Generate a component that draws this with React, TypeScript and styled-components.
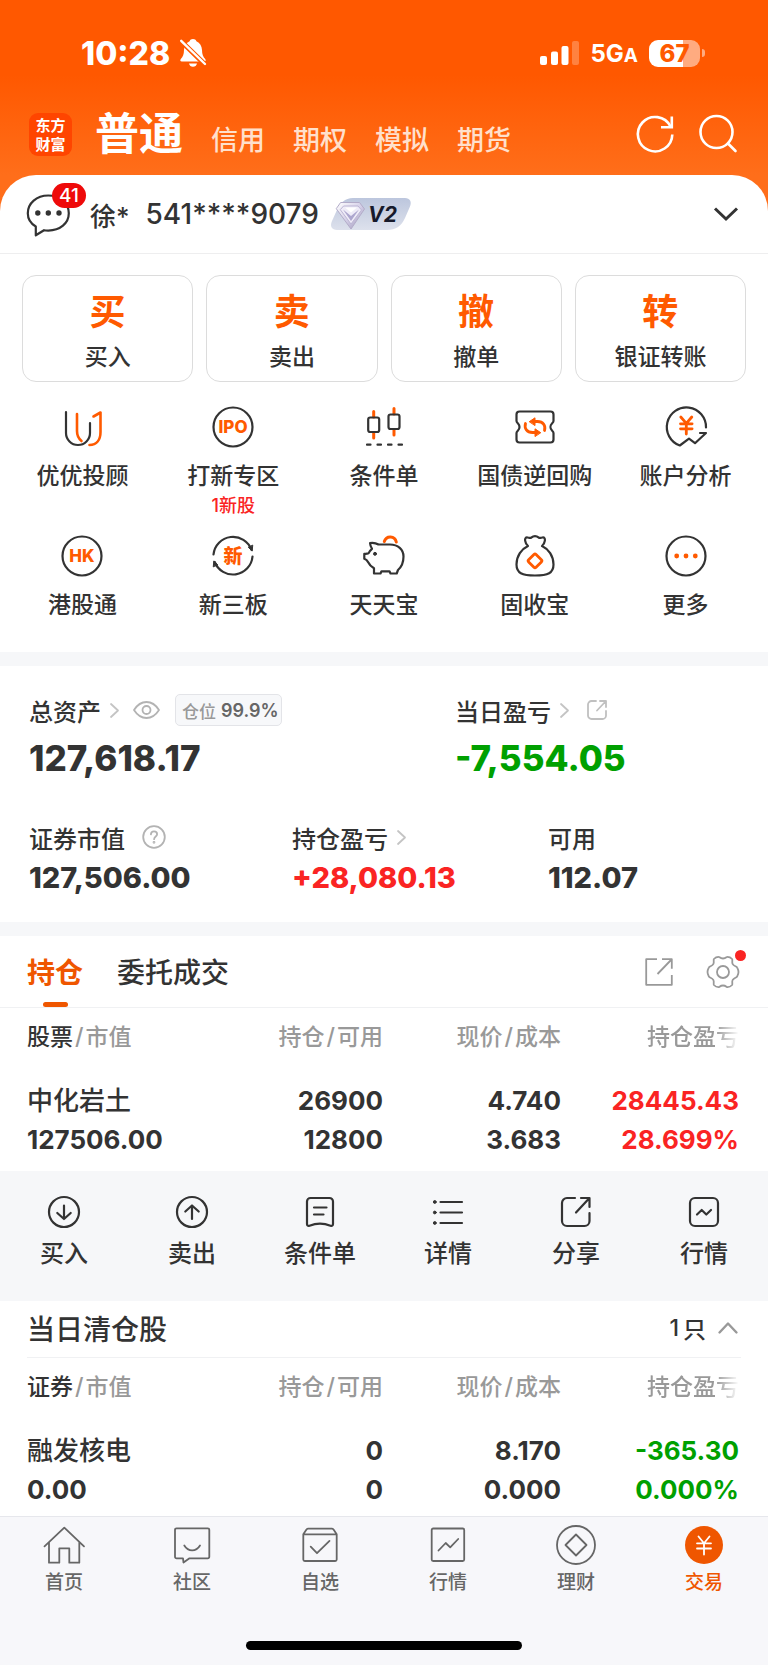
import React from "react";
import styled, { createGlobalStyle } from "styled-components";

const ORANGE = "#ff5a00";
const ACTIVE = "#ef5600";
const INK = "#333333";
const MUTED = "#999999";
const RED = "#fa2423";
const GREEN = "#00a000";

const GlobalStyle = createGlobalStyle`
  * { box-sizing: border-box; }
  body {
    margin: 0;
    background: #fff;
    color: ${INK};
    font-family: Inter, "Noto Sans CJK SC", sans-serif;
    font-weight: 500;
  }
  button {
    margin: 0;
    padding: 0;
    border: 0;
    background: none;
    color: inherit;
    font: inherit;
    cursor: pointer;
  }
  a { color: inherit; text-decoration: none; }
  h2, p, dl, dd, dt, ul { margin: 0; padding: 0; font-weight: inherit; font-size: inherit; }
  svg { display: block; flex: none; }
`;

/* ---------- page shell ---------- */

const Page = styled.div`
  background: linear-gradient(#ff5800 75px, #ff6e1a 175px);
`;

const Sheet = styled.main`
  background: #fff;
  border-radius: 36px 36px 0 0;
`;

const Divider = styled.div`
  height: 14px;
  background: #f6f7f9;
`;

/* ---------- status bar ---------- */

const StatusBar = styled.div`
  display: flex;
  align-items: center;
  height: 106px;
  padding: 0 63px 0 81px;
  color: #fff;
`;

const Clock = styled.span`
  font-size: 32px;
  font-weight: 800;
  margin-right: 10px;
`;

const StatusRight = styled.div`
  display: flex;
  align-items: center;
  margin-left: auto;
`;

const Network = styled.span`
  margin: 0 11px;
  font-size: 24px;
  font-weight: 700;
  small { font-size: 19px; }
`;

const Battery = styled.span`
  width: 51px;
  height: 27px;
  border-radius: 9px;
  background: linear-gradient(90deg, #fff 67%, #ffab80 67%);
  color: ${ORANGE};
  font-size: 24px;
  font-weight: 800;
  line-height: 27px;
  text-align: center;
`;

const BatteryTip = styled.span`
  width: 3px;
  height: 8px;
  margin-left: 2px;
  border-radius: 0 3px 3px 0;
  background: #ffab80;
`;

/* ---------- top navigation ---------- */

const TopNav = styled.header`
  display: flex;
  align-items: center;
  height: 69px;
  padding: 0 32px 13px 29px;
  color: #fff;
`;

const Logo = styled.a`
  display: flex;
  flex-direction: column;
  justify-content: center;
  width: 43px;
  height: 43px;
  border-radius: 9px;
  background: #ff4500;
  color: #fff;
  font-family: "Noto Sans CJK SC", sans-serif;
  font-size: 15px;
  font-weight: 700;
  line-height: 19px;
  text-align: center;
`;

const Modes = styled.nav`
  display: flex;
  align-items: baseline;
  gap: 28px;
  margin-left: 23px;
  padding-top: 6px;
`;

const Mode = styled.button<{ $active?: boolean }>`
  font-size: ${(p) => (p.$active ? 44 : 27)}px;
  font-weight: ${(p) => (p.$active ? 700 : 500)};
  line-height: 56px;
  color: ${(p) => (p.$active ? "#fff" : "#ffe0cc")};
`;

const NavIcons = styled.div`
  display: flex;
  gap: 25px;
  margin-left: auto;
`;

/* ---------- account ---------- */

const AccountBar = styled.div`
  display: flex;
  align-items: center;
  height: 79px;
  padding: 0 30px 0 26px;
  border-bottom: 1px solid #eeeeef;
  font-size: 28px;
`;

const ChatButton = styled.button`
  position: relative;
`;

const Badge = styled.span`
  position: absolute;
  top: -9px;
  left: 26px;
  width: 34px;
  height: 25px;
  border-radius: 13px;
  background: #ee0a0a;
  color: #fff;
  font-size: 19px;
  line-height: 25px;
  text-align: center;
`;

const Holder = styled.span`
  margin-left: 20px;
  font-size: 26px;
`;

const AccountNo = styled.span`
  margin-left: 16px;
`;

const Level = styled.span`
  display: flex;
  align-items: center;
  margin-left: 12px;
`;

const Expand = styled.button`
  margin-left: auto;
`;

/* ---------- trade cards ---------- */

const TradeCards = styled.div`
  display: grid;
  grid-template-columns: repeat(4, 1fr);
  gap: 13px;
  padding: 21px 22px 0;
`;

const TradeCard = styled.button`
  display: flex;
  flex-direction: column;
  align-items: center;
  height: 107px;
  padding-top: 12px;
  border: 1px solid #dcdcdc;
  border-radius: 14px;
  font-size: 23px;
  line-height: 32px;
`;

const BigGlyph = styled.span`
  margin-bottom: 5px;
  color: ${ORANGE};
  font-size: 36px;
  font-weight: 700;
  line-height: 48px;
`;

/* ---------- shortcuts ---------- */

const Shortcuts = styled.div`
  display: grid;
  grid-template-columns: repeat(5, 1fr);
  row-gap: 17px;
  padding: 24px 7px 33px;
`;

const Shortcut = styled.button`
  display: flex;
  flex-direction: column;
  align-items: center;
  justify-content: flex-start;
  font-size: 23px;
  line-height: 28px;
  svg { margin-bottom: 14px; }
`;

const Note = styled.span`
  margin-top: 4px;
  color: ${RED};
  font-size: 18px;
  line-height: 24px;
`;

/* ---------- assets ---------- */

const Assets = styled.section`
  padding: 28px 29px;
`;

const AssetRow = styled.dl<{ $columns: string }>`
  display: grid;
  grid-template-columns: ${(p) => p.$columns};
  & + & { margin-top: 43px; }
`;

const AssetLabel = styled.dt`
  display: flex;
  align-items: center;
  height: 32px;
  font-size: 24px;
  white-space: nowrap;
`;

const Amount = styled.dd<{ $large?: boolean; $color?: string }>`
  margin-top: ${(p) => (p.$large ? 12 : 9)}px;
  color: ${(p) => p.$color || INK};
  font-size: ${(p) => (p.$large ? 35 : 29)}px;
  font-weight: 800;
  line-height: ${(p) => (p.$large ? 40 : 32)}px;
`;

const IconButton = styled.button<{ $gap?: number }>`
  position: relative;
  margin-left: ${(p) => p.$gap || 0}px;
`;

const Ratio = styled.span`
  display: flex;
  align-items: center;
  gap: 5px;
  height: 32px;
  margin-left: 15px;
  padding: 0 2px 0 6px;
  border: 1px solid #e3e4e8;
  border-radius: 5px;
  background: #f7f8fa;
  color: ${MUTED};
  font-size: 17px;
  b { color: #666; font-size: 18px; font-weight: 600; }
`;

/* ---------- holdings ---------- */

const TabsRow = styled.div`
  display: flex;
  height: 72px;
  padding: 0 29px 0 27px;
  border-bottom: 1px solid #f0f1f3;
`;

const Tab = styled.button<{ $active?: boolean }>`
  display: flex;
  flex-direction: column;
  align-items: center;
  margin-right: 34px;
  color: ${(p) => (p.$active ? ACTIVE : INK)};
  font-size: 28px;
  font-weight: ${(p) => (p.$active ? 700 : 500)};
  line-height: 74px;
  &::after {
    content: "";
    width: 25px;
    height: 5px;
    margin-top: -8px;
    border-radius: 3px;
    background: ${(p) => (p.$active ? ACTIVE : "transparent")};
  }
`;

const TabTools = styled.div`
  display: flex;
  align-items: center;
  gap: 34px;
  margin-left: auto;
`;

const RedDot = styled.span`
  position: absolute;
  top: -6px;
  right: -7px;
  width: 11px;
  height: 11px;
  border-radius: 50%;
  background: ${RED};
`;

const TableWrap = styled.div`
  padding: 0 29px 0 27px;
`;

const Table = styled.table<{ $tight?: boolean }>`
  width: 100%;
  table-layout: fixed;
  border-collapse: collapse;
  white-space: nowrap;
  text-align: right;
  th {
    height: 58px;
    padding: 0 0 4px;
    color: ${MUTED};
    font-size: 23px;
    font-weight: 500;
  }
  th b { color: ${INK}; font-weight: 500; }
  th i { margin: 0 2px; font-style: normal; }
  td {
    padding: 15px 0 ${(p) => (p.$tight ? 7 : 12)}px;
    font-size: 26px;
    font-weight: 700;
    line-height: 39px;
  }
  th:first-child, td:first-child { text-align: left; }
  th:last-child {
    -webkit-mask-image: linear-gradient(90deg, #000 87%, transparent);
    mask-image: linear-gradient(90deg, #000 87%, transparent);
  }
`;

const Line = styled.div`
  height: 39px;
`;

const StockName = styled(Line)`
  font-size: 26px;
  font-weight: 500;
`;

const Change = styled.td<{ $color: string }>`
  color: ${(p) => p.$color};
`;

const Actions = styled.div`
  display: grid;
  grid-template-columns: repeat(6, 1fr);
  padding: 25px 0 31px;
  background: #f6f7f9;
`;

const Action = styled.button`
  display: flex;
  flex-direction: column;
  align-items: center;
  gap: 10px;
  font-size: 24px;
  line-height: 32px;
`;

const ClearedHead = styled.div`
  display: flex;
  align-items: center;
  height: 57px;
  margin: 0 27px;
  padding-bottom: 2px;
  border-bottom: 1px solid #f0f1f3;
  h2 { font-size: 28px; }
`;

const Count = styled.button`
  display: flex;
  align-items: center;
  gap: 4px;
  margin-left: auto;
  padding-right: 3px;
  font-size: 23px;
  svg { margin-left: 8px; }
`;

/* ---------- bottom bar ---------- */

const BottomBar = styled.footer`
  padding: 8px 0 15px;
  border-top: 1px solid #e6e7ec;
  background: #f7f7fa;
`;

const BottomTabs = styled.nav`
  display: grid;
  grid-template-columns: repeat(6, 1fr);
`;

const BottomTab = styled.a<{ $active?: boolean }>`
  display: flex;
  flex-direction: column;
  align-items: center;
  gap: 4px;
  color: ${(p) => (p.$active ? ACTIVE : "#666")};
  font-size: 19px;
  line-height: 28px;
`;

const HomeIndicator = styled.div`
  width: 36%;
  height: 9px;
  margin: 44px auto 0;
  border-radius: 5px;
  background: #000;
`;

/* ---------- icons ---------- */

type IconProps = {
  w: number;
  h?: number;
  sw?: number;
  color?: string;
  children: React.ReactNode;
};

const Icon = ({ w, h = w, sw = 2.2, color = INK, children }: IconProps) => (
  <svg
    width={w}
    height={h}
    viewBox={`0 0 ${w} ${h}`}
    fill="none"
    stroke={color}
    strokeWidth={sw}
    strokeLinecap="round"
    strokeLinejoin="round"
    overflow="visible"
    aria-hidden="true"
  >
    {children}
  </svg>
);

const IconText = ({ size, y, children }: { size: number; y: number; children: string }) => (
  <text x="21" y={y} fontSize={size} fontWeight="800" textAnchor="middle" fill={ORANGE} stroke="none">
    {children}
  </text>
);

const BellOff = () => (
  <Icon w={26} h={28} color="none">
    <path
      fill="#fff"
      d="M13 0c1.600 0 3 .8 3.400 2.200C20 3.600 21.800 7 22 11c.1 4.500 1 6.500 3.200 9 .9 1.200.6 2.600-1 2.600H1.800c-1.600 0-1.900-1.400-1-2.600C3 17.500 3.900 15.500 4 11c.2-4 2-7.400 5.600-8.800C10 .8 11.400 0 13 0ZM9 24.500h8c-.4 2-2 3.300-4 3.300s-3.600-1.300-4-3.300Z"
    />
    <path stroke="#ff5800" strokeWidth="5" d="M1.500 2.500 25 25.500" />
    <path stroke="#fff" strokeWidth="2.400" d="M1.200 1.800 25 25" />
  </Icon>
);

const Signal = () => (
  <Icon w={40} h={25} color="none">
    <g fill="#fff">
      <rect x="1" y="15" width="7" height="9" rx="2" />
      <rect x="12" y="10.500" width="7" height="13.500" rx="2" />
      <rect x="22.500" y="5" width="7" height="19" rx="2" />
      <rect x="33" y="0" width="7" height="24" rx="2" opacity=".25" />
    </g>
  </Icon>
);

const Refresh = () => (
  <Icon w={37} h={38} color="#fff" sw={2.6}>
    <g strokeLinecap="butt" strokeLinejoin="miter">
      <path d="M35.300 19.500A17.200 17.200 0 1 1 33.500 11.500" />
      <path d="M34.800 1.500V12.300H24" />
    </g>
  </Icon>
);

const Search = () => (
  <Icon w={37} h={38} color="#fff" sw={2.6}>
    <circle cx="17.500" cy="17" r="16" />
    <path d="m29 28.500 7.500 7.500" />
  </Icon>
);

const Chat = () => (
  <Icon w={44} sw={2.200}>
    <path d="M9.800 43.300V34.500C4.500 31.500 1.800 27 1.800 21.300 1.800 11.300 10.600 3.500 22.300 3.500S42.800 11.300 42.800 21.300 34 38.600 22.300 38.600c-1.600 0-3 0-4.300-.4Z" />
    <g fill={INK} stroke="none">
      <circle cx="11.800" cy="21" r="2.700" />
      <circle cx="22.300" cy="21" r="2.700" />
      <circle cx="33" cy="21" r="2.700" />
    </g>
  </Icon>
);

const LevelBadge = () => (
  <Icon w={82} h={32} color="none">
    <defs>
      <linearGradient id="level" x1="0" y1="0" x2="0" y2="1">
        <stop offset="0" stopColor="#bcc6dd" />
        <stop offset="1" stopColor="#dde1ec" />
      </linearGradient>
      <linearGradient id="gem" x1="0" y1="0" x2="1" y2="1">
        <stop offset="0" stopColor="#fff" />
        <stop offset=".5" stopColor="#d5d0e8" />
        <stop offset="1" stopColor="#9d95b8" />
      </linearGradient>
    </defs>
    <path
      fill="url(#level)"
      d="M22 0H74c5 0 7 4 5 8.500L74 20c-3.500 8-9 12-18 12H6c-5 0-7.500-3.500-5-9L5.500 13C9 5 14 0 22 0Z"
    />
    <path fill="url(#gem)" stroke="#b3acc9" strokeWidth="1" d="M10 4.500h18.500l5 6.500L20 31 5.500 11Z" />
    <path fill="#efecf8" stroke="#bcb5d4" strokeWidth="1" d="M13 8h14l3.500 4L20 26 9.500 12Z" />
    <path fill="#aea7cf" d="m12 11.500 8 6.500 8-6.500L20 23Z" />
    <path fill="#fff" d="m14 9.500 6 5 6-5Z" />
    <text x="37" y="24" fontSize="21" fontWeight="700" fontStyle="italic" fill="#171a2b">
      V2
    </text>
  </Icon>
);

const ChevronDown = () => (
  <Icon w={24} h={14} sw={3}>
    <path strokeLinejoin="miter" strokeLinecap="butt" d="M1 1.500 12 12 23 1.500" />
  </Icon>
);

const ChevronRight = () => (
  <Icon w={9} h={15} color="#c4c4c4" sw={1.800}>
    <path d="m1 1 7 6.500L1 14" />
  </Icon>
);

const ChevronUp = () => (
  <Icon w={20} h={12} color="#999" sw={2.400}>
    <path d="m1.500 10.500 8.500-9 8.500 9" />
  </Icon>
);

const Eye = () => (
  <Icon w={27} h={18} color="#b3b3b3" sw={1.800}>
    <path d="M1 9C4.500 3.500 8.700 1 13.500 1S22.500 3.500 26 9c-3.500 5.500-7.700 8-12.500 8S4.500 14.500 1 9Z" />
    <circle cx="13.500" cy="9" r="4" />
  </Icon>
);

const Help = () => (
  <Icon w={24} color="#b3b3b3" sw={1.800}>
    <circle cx="12" cy="12" r="10.800" />
    <path d="M8.900 9.400C9 7.500 10.300 6.400 12 6.400s3.100 1.100 3.100 2.800c0 2.200-3 2.500-3 5" />
    <circle cx="12" cy="17.300" r=".5" />
  </Icon>
);

const ShareSmall = () => (
  <Icon w={20} color="#c0c0c0" sw={1.800}>
    <path d="M9 1H4.500A3.500 3.500 0 0 0 1 4.500v11A3.500 3.500 0 0 0 4.500 19h11a3.500 3.500 0 0 0 3.500-3.500V11" />
    <path d="M13 1h6v6M18.500 1.500 10 10.500" />
  </Icon>
);

const ShareTab = () => (
  <Icon w={28} color={MUTED} sw={1.800}>
    <g strokeLinecap="butt">
      <path d="M12 1.200H1.200v25.600h25.600V17M17 1.200h9.800v9.500M26.500 1.500 12.500 16" />
    </g>
  </Icon>
);

const Gear = () => (
  <Icon w={32} color={MUTED} sw={1.800}>
    <path d="M11.500.8c1 0 1.500 1.700 4.500 1.700S19.500.8 20.500.8c1.500 0 3.500 1 4.600 2.200.8 1-.6 3 .6 5.100 1.300 2.200 3.800 2.100 4.500 3.500.8 1.500 1.300 3.200 1.300 4.400s-.5 2.900-1.300 4.400c-.7 1.400-3.200 1.300-4.500 3.500-1.200 2.100.2 4.100-.6 5.100-1.100 1.200-3.100 2.200-4.600 2.200-1 0-1.500-1.700-4.500-1.700s-3.500 1.700-4.500 1.700c-1.500 0-3.500-1-4.600-2.200-.8-1 .6-3-.6-5.100-1.300-2.200-3.800-2.100-4.500-3.500C1 18.900.5 17.200.5 16s.5-2.900 1.300-4.400c.7-1.400 3.200-1.300 4.500-3.500C7.500 6 6.100 4 6.900 3 8 1.800 10 .8 11.500.8Z" />
    <circle cx="16" cy="16" r="6" />
  </Icon>
);

const Advisor = () => (
  <Icon w={42}>
    <path d="M5 6v21a12 12 0 0 0 24 0V17" />
    <g stroke={ORANGE} strokeWidth="2.600">
      <path d="M16 8v17c0 4.500 1.500 7.500 4.500 10" />
      <path d="m32.500 10.500 7-4V26c0 8-4 13-11 13" />
    </g>
  </Icon>
);

const Ring = () => <circle cx="21" cy="21" r="19.500" />;

const Ipo = () => (
  <Icon w={42}>
    <Ring />
    <IconText size={17} y={27}>IPO</IconText>
  </Icon>
);

const Candles = () => (
  <Icon w={42}>
    <path stroke={ORANGE} strokeWidth="3" d="M10.700 5.500V11M10.700 27v5M31 2.500V8M31 24v5" />
    <rect x="5.200" y="11.500" width="11" height="14.500" rx="2" />
    <rect x="25.500" y="8.500" width="11" height="14.500" rx="2" />
    <path d="M4 38.700h3.500M14.500 38.700H18M25 38.700h3.500M35.500 38.700H39" />
  </Icon>
);

const Repo = () => (
  <Icon w={42}>
    <path d="M5.500 5.500h31a3 3 0 0 1 3 3V15c0 1-.5 1.500-1.500 2.500-2 2-2 5 0 7 1 1 1.500 1.500 1.500 2.500v6.500a3 3 0 0 1-3 3h-31a3 3 0 0 1-3-3V27c0-1 .5-1.500 1.500-2.500 2-2 2-5 0-7C3 16.500 2.500 16 2.500 15V8.500a3 3 0 0 1 3-3Z" />
    <g stroke={ORANGE} strokeWidth="2.800">
      <path d="M30.500 24.500c1.500-5-1.500-9-7-9H20M11.500 17.500c-1.500 5 1.500 9 7 9H22" />
      <path fill={ORANGE} strokeWidth="1" d="M15.500 15.500 21 11.800v7.400ZM26.500 26.500 21 22.800v7.400Z" />
    </g>
  </Icon>
);

const Analysis = () => (
  <Icon w={42}>
    <path d="M41 21.500A19.600 19.600 0 1 0 14.800 39.500L24 32.700l6 4.500L41 27h-6" />
    <path stroke={ORANGE} strokeWidth="2.800" d="m15.800 11 5.500 6.300 5.500-6.300M21.300 17.500V28M15.500 17.800h11.600M15.500 22.800h11.600" />
  </Icon>
);

const HongKong = () => (
  <Icon w={42}>
    <Ring />
    <IconText size={17} y={27}>HK</IconText>
  </Icon>
);

const NewBoard = () => (
  <Icon w={42}>
    <path d="M1.500 19.500A19.600 19.600 0 0 1 39.500 15M40.500 21.500A19.600 19.600 0 0 1 2.700 27" />
    <path fill={INK} strokeWidth="1" d="m36.500 12.500 3.700 3.500.5-5.500ZM5.500 29.500 1.800 26l-.5 5.500Z" />
    <IconText size={19} y={28}>新</IconText>
  </Icon>
);

const Piggy = () => (
  <Icon w={42}>
    <path d="M1.300 18.800v5c2.500.8 3 1.700 3.700 3.200 1.300 2.800 3 4.500 6 6.300v5.200h6.500l1-2.200h8l1 2.200h6.200l1.300-3.500c4-3.500 5.500-8.500 5.500-13.500 0-7-5.500-12-13.500-12H15.500C12.500 7.700 10 7.500 7 8c.2 2.500 1 4 2 5.800-1.800 1.400-2.800 2.700-3.500 4.500-1.200.6-2.500.6-4.200.5Z" />
    <path stroke={ORANGE} strokeWidth="3" d="M21.300 6.500c2-6.300 10.500-6 12 .5" />
    <circle cx="12" cy="18.800" r="1.500" fill={INK} strokeWidth="1" />
  </Icon>
);

const MoneyBag = () => (
  <Icon w={42}>
    <path d="M14 11c-3-2.500-4.500-9-.5-8.500 1.500.2 2.500.8 3.700.2 2.300-2 5.300-2 7.600 0 1.200.6 2.200 0 3.700-.2 4-.5 2.500 6-.5 8.500 6.500 3 11.500 10 11.500 18.500C39.500 38 34 40.500 21 40.500S2.500 38 2.500 29.500C2.500 21 7.500 14 14 11Z" />
    <rect x="15.800" y="20.600" width="10.500" height="10.500" rx="1.500" transform="rotate(45 21 25.800)" stroke={ORANGE} strokeWidth="2.800" />
  </Icon>
);

const More = () => (
  <Icon w={42}>
    <Ring />
    <g fill={ORANGE} stroke="none">
      <circle cx="11.700" cy="21" r="2.400" />
      <circle cx="21" cy="21" r="2.400" />
      <circle cx="30.300" cy="21" r="2.400" />
    </g>
  </Icon>
);

const BuyIcon = () => (
  <Icon w={32}>
    <circle cx="16" cy="16" r="15" />
    <path d="M16 9.500V23M9.300 17l6.700 6 6.700-6" />
  </Icon>
);

const SellIcon = () => (
  <Icon w={32}>
    <circle cx="16" cy="16" r="15" />
    <path d="M16 23V9.500M9.300 15.500 16 9.500l6.700 6" />
  </Icon>
);

const OrderIcon = () => (
  <Icon w={32}>
    <path d="M6.500 2h19a3.500 3.500 0 0 1 3.500 3.500V28c0 1.700-1 2.200-2.500 1.800C20 27 12 27 5.500 29.800 4 30.200 3 29.700 3 28V5.500A3.500 3.500 0 0 1 6.500 2Z" />
    <path d="M10 11.500h12.500M10 18.500h9.500" />
  </Icon>
);

const DetailIcon = () => (
  <Icon w={32}>
    <path d="M8.500 6H30M8.500 16.500H30M8.500 27H30" />
    <g fill={INK} strokeWidth="1">
      <circle cx="2.800" cy="6" r="1.400" />
      <circle cx="2.800" cy="16.500" r="1.400" />
      <circle cx="2.800" cy="27" r="1.400" />
    </g>
  </Icon>
);

const ShareIcon = () => (
  <Icon w={32}>
    <path d="M15 2H7a5 5 0 0 0-5 5v18a5 5 0 0 0 5 5h17.500a5 5 0 0 0 5-5v-8M21 2h8.500v9M29 2.500l-13 14" />
  </Icon>
);

const QuoteIcon = () => (
  <Icon w={32}>
    <rect x="2" y="2" width="28" height="28" rx="5" />
    <path d="m9 18.500 4.700-4.500 4.600 4.500 4.700-4.500" />
  </Icon>
);

const HomeTab = () => (
  <Icon w={40} color="#666" sw={1.800}>
    <path d="M.5 21.300 20.300 2.700 40 21.300M5 17.300v20.400h10.300V23.300h10v14.400h10V17.300" />
  </Icon>
);

const CommunityTab = () => (
  <Icon w={40} color="#666" sw={1.800}>
    <path d="M4.500 3.300h31.300a1.500 1.500 0 0 1 1.500 1.500v27a1.500 1.500 0 0 1-1.500 1.500H17.500l-6 4.300-.5-4.300H4.500A1.500 1.500 0 0 1 3 31.800v-27a1.500 1.500 0 0 1 1.500-1.500Z" />
    <path d="M12.300 20.500c4 6.500 11.700 6.500 15.700 0" />
  </Icon>
);

const WatchTab = () => (
  <Icon w={40} color="#666" sw={1.800}>
    <path d="m3.300 9.300 3-4.500a2 2 0 0 1 1.700-1.100h24a2 2 0 0 1 1.700 1.100l3 4.500V34.500a1.500 1.500 0 0 1-1.500 1.500H4.800a1.500 1.500 0 0 1-1.500-1.500ZM3.300 9.300h33.400M10.700 21.700l6.300 6.500 12.500-12.300" />
  </Icon>
);

const MarketTab = () => (
  <Icon w={40} color="#666" sw={1.800}>
    <rect x="3.700" y="3.500" width="32.500" height="32.500" rx="1.500" />
    <path d="m10.500 25.500 7.200-7.500 4.500 4.300 8-8.300" />
  </Icon>
);

const WealthTab = () => (
  <Icon w={40} color="#666" sw={1.800}>
    <circle cx="20" cy="20" r="19" />
    <path d="M20 9.500 30.500 20 20 30.500 9.500 20Z" />
  </Icon>
);

const TradeTab = () => (
  <Icon w={40} color="#fff" sw={1.800}>
    <circle cx="20" cy="20" r="19" fill={ACTIVE} stroke="none" />
    <path d="m14.500 11.500 5.500 6.800 5.500-6.800M20 18.300v11.200M13 18.300h14M13 23.500h14" />
  </Icon>
);

/* ---------- data ---------- */

const modes = ["普通", "信用", "期权", "模拟", "期货"];

const trades = [
  ["买", "买入"],
  ["卖", "卖出"],
  ["撤", "撤单"],
  ["转", "银证转账"],
];

const shortcuts: { label: string; icon: React.ReactNode; note?: string }[] = [
  { label: "优优投顾", icon: <Advisor /> },
  { label: "打新专区", icon: <Ipo />, note: "1新股" },
  { label: "条件单", icon: <Candles /> },
  { label: "国债逆回购", icon: <Repo /> },
  { label: "账户分析", icon: <Analysis /> },
  { label: "港股通", icon: <HongKong /> },
  { label: "新三板", icon: <NewBoard /> },
  { label: "天天宝", icon: <Piggy /> },
  { label: "固收宝", icon: <MoneyBag /> },
  { label: "更多", icon: <More /> },
];

const actions = [
  { label: "买入", icon: <BuyIcon /> },
  { label: "卖出", icon: <SellIcon /> },
  { label: "条件单", icon: <OrderIcon /> },
  { label: "详情", icon: <DetailIcon /> },
  { label: "分享", icon: <ShareIcon /> },
  { label: "行情", icon: <QuoteIcon /> },
];

const bottomTabs = [
  { label: "首页", icon: <HomeTab /> },
  { label: "社区", icon: <CommunityTab /> },
  { label: "自选", icon: <WatchTab /> },
  { label: "行情", icon: <MarketTab /> },
  { label: "理财", icon: <WealthTab /> },
  { label: "交易", icon: <TradeTab />, active: true },
];

type Holding = {
  head: string;
  name: string;
  value: string;
  amounts: [string, string];
  prices: [string, string];
  profit: [string, string];
  color: string;
};

const HoldingTable = ({ row, tight }: { row: Holding; tight?: boolean }) => (
  <TableWrap>
    <Table $tight={tight}>
      <thead>
        <tr>
          <th scope="col"><b>{row.head}</b><i>/</i>市值</th>
          <th scope="col">持仓<i>/</i>可用</th>
          <th scope="col">现价<i>/</i>成本</th>
          <th scope="col">持仓盈亏</th>
        </tr>
      </thead>
      <tbody>
        <tr>
          <td>
            <StockName>{row.name}</StockName>
            <Line>{row.value}</Line>
          </td>
          {[row.amounts, row.prices].map((pair, i) => (
            <td key={i}>
              <Line>{pair[0]}</Line>
              <Line>{pair[1]}</Line>
            </td>
          ))}
          <Change $color={row.color}>
            <Line>{row.profit[0]}</Line>
            <Line>{row.profit[1]}</Line>
          </Change>
        </tr>
      </tbody>
    </Table>
  </TableWrap>
);

export default function App() {
  return (
    <Page>
      <GlobalStyle />
      <StatusBar>
        <Clock>10:28</Clock>
        <BellOff />
        <StatusRight>
          <Signal />
          <Network>5G<small>A</small></Network>
          <Battery>67</Battery>
          <BatteryTip />
        </StatusRight>
      </StatusBar>
      <TopNav>
        <Logo href="#">
          <span>东方</span>
          <span>财富</span>
        </Logo>
        <Modes>
          {modes.map((m, i) => (
            <Mode key={m} $active={i === 0}>{m}</Mode>
          ))}
        </Modes>
        <NavIcons>
          <button aria-label="刷新"><Refresh /></button>
          <button aria-label="搜索"><Search /></button>
        </NavIcons>
      </TopNav>

      <Sheet>
        <AccountBar>
          <ChatButton aria-label="消息">
            <Chat />
            <Badge>41</Badge>
          </ChatButton>
          <Holder>徐*</Holder>
          <AccountNo>541****9079</AccountNo>
          <Level><LevelBadge /></Level>
          <Expand aria-label="切换账户"><ChevronDown /></Expand>
        </AccountBar>

        <TradeCards>
          {trades.map(([glyph, label]) => (
            <TradeCard key={label}>
              <BigGlyph>{glyph}</BigGlyph>
              {label}
            </TradeCard>
          ))}
        </TradeCards>

        <Shortcuts>
          {shortcuts.map((s) => (
            <Shortcut key={s.label}>
              {s.icon}
              {s.label}
              {s.note && <Note>{s.note}</Note>}
            </Shortcut>
          ))}
        </Shortcuts>

        <Divider />

        <Assets>
          <AssetRow $columns="426fr 284fr">
            <div>
              <AssetLabel>
                总资产
                <IconButton $gap={9} aria-label="资产详情"><ChevronRight /></IconButton>
                <IconButton $gap={14} aria-label="隐藏金额"><Eye /></IconButton>
                <Ratio>仓位 <b>99.9%</b></Ratio>
              </AssetLabel>
              <Amount $large>127,618.17</Amount>
            </div>
            <div>
              <AssetLabel>
                当日盈亏
                <IconButton $gap={9} aria-label="盈亏详情"><ChevronRight /></IconButton>
                <IconButton $gap={18} aria-label="分享盈亏"><ShareSmall /></IconButton>
              </AssetLabel>
              <Amount $large $color={GREEN}>-7,554.05</Amount>
            </div>
          </AssetRow>
          <AssetRow $columns="263fr 256fr 191fr">
            <div>
              <AssetLabel>
                证券市值
                <IconButton $gap={17} aria-label="说明"><Help /></IconButton>
              </AssetLabel>
              <Amount>127,506.00</Amount>
            </div>
            <div>
              <AssetLabel>
                持仓盈亏
                <IconButton $gap={9} aria-label="持仓盈亏详情"><ChevronRight /></IconButton>
              </AssetLabel>
              <Amount $color={RED}>+28,080.13</Amount>
            </div>
            <div>
              <AssetLabel>可用</AssetLabel>
              <Amount>112.07</Amount>
            </div>
          </AssetRow>
        </Assets>

        <Divider />

        <TabsRow>
          <Tab $active>持仓</Tab>
          <Tab>委托成交</Tab>
          <TabTools>
            <IconButton aria-label="分享持仓"><ShareTab /></IconButton>
            <IconButton aria-label="设置"><Gear /><RedDot /></IconButton>
          </TabTools>
        </TabsRow>
        <HoldingTable
          row={{
            head: "股票",
            name: "中化岩土",
            value: "127506.00",
            amounts: ["26900", "12800"],
            prices: ["4.740", "3.683"],
            profit: ["28445.43", "28.699%"],
            color: RED,
          }}
        />

        <Actions>
          {actions.map((a) => (
            <Action key={a.label}>
              {a.icon}
              {a.label}
            </Action>
          ))}
        </Actions>

        <ClearedHead>
          <h2>当日清仓股</h2>
          <Count>
            <span>1</span>
            <span>只</span>
            <ChevronUp />
          </Count>
        </ClearedHead>
        <HoldingTable
          tight
          row={{
            head: "证券",
            name: "融发核电",
            value: "0.00",
            amounts: ["0", "0"],
            prices: ["8.170", "0.000"],
            profit: ["-365.30", "0.000%"],
            color: GREEN,
          }}
        />
      </Sheet>

      <BottomBar>
        <BottomTabs>
          {bottomTabs.map((t) => (
            <BottomTab key={t.label} href="#" $active={t.active}>
              {t.icon}
              {t.label}
            </BottomTab>
          ))}
        </BottomTabs>
        <HomeIndicator />
      </BottomBar>
    </Page>
  );
}
